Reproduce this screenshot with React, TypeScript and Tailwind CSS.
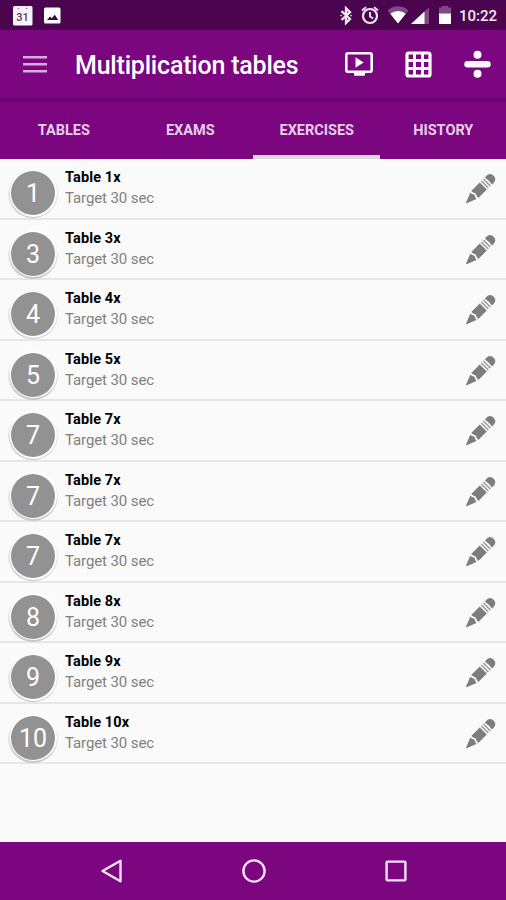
const TABS = ['TABLES', 'EXAMS', 'EXERCISES', 'HISTORY'];

const EXERCISES = [1, 3, 4, 5, 7, 7, 7, 8, 9, 10];

function StatusBar() {
  return (
    <div className="flex h-[30px] items-center bg-[#4b044e] pt-[2px]">
      <svg className="ml-3 h-5 w-[50px]" viewBox="0 0 50 20" fill="none">
        <rect x="1" y="0" width="19.5" height="19.5" rx="1.5" fill="#fbf3fb" />
        <circle cx="6.5" cy="2.5" r="1" fill="#a98bab" />
        <circle cx="14.5" cy="2.5" r="1" fill="#a98bab" />
        <text x="10.5" y="15.3" textAnchor="middle" fontSize="11" fontWeight="500" fontFamily="Roboto, sans-serif" fill="#5b3a5e">31</text>
        <rect x="32" y="1.5" width="16.5" height="16" rx="1.5" fill="#fff" />
        <path d="M35 14l3-3.400 1.800 1.600 3-3.400 3.400 5.200z" fill="#3a0a3d" />
      </svg>
      <div className="ml-auto flex items-center">
        <svg className="h-5 w-[116px]" viewBox="0 0 116 20" fill="none">
          <path d="M3.5 5.2l8.500 7.800-4 4V2.200l4 4L3.500 14" stroke="#f3e6f4" strokeWidth="2.300" />
          <path d="M3 9.600h.1M13 9.600h.1" stroke="#f3e6f4" strokeWidth="1.600" strokeLinecap="round" />
          <circle cx="32" cy="10" r="7" stroke="#f3e6f4" strokeWidth="2.200" />
          <path d="M32 6v4.500l3.200 2M24 4.500l4-3.400M40 4.500l-4-3.400" stroke="#f3e6f4" strokeWidth="1.900" />
          <path d="M49.500 4.500a15 15 0 0 1 21 0L60 17.500z" fill="#7f4a83" />
          <path d="M52.300 7.800a12 12 0 0 1 15.400 0L60 17.500z" fill="#fff" />
          <path d="M91 1.500v16.500H73z" fill="#7f4a83" />
          <path d="M86.500 5.500v12.500H73z" fill="#fff" />
          <path d="M101 1.500h3V0h6v1.500h3v7h-12z" fill="#7f4a83" />
          <path d="M101 7.500h12v10.500h-12z" fill="#fff" />
        </svg>
        <span className="mr-[9px] ml-[5px] w-[38px] text-[15px] leading-5 font-medium whitespace-nowrap text-[#f6ebf7]">10:22</span>
      </div>
    </div>
  );
}

function Toolbar() {
  return (
    <header className="flex h-[68px] items-center bg-[#7b0680] text-white">
      <svg className="ml-[23px] h-[18px] w-6" viewBox="0 0 24 18">
        <path d="M0 2.300h24M0 9.300h24M0 16.300h24" stroke="#d9aadc" strokeWidth="2.600" />
      </svg>
      <h1 className="ml-7 pt-[4px] text-[25px] leading-8 font-medium tracking-[-0.2px] whitespace-nowrap">Multiplication tables</h1>
      <svg className="mr-8 ml-auto h-6 w-7" viewBox="0 0 28 24" fill="none">
        <rect x="1.300" y="1.300" width="25.400" height="18.400" rx="1.800" stroke="#fff" strokeWidth="2.600" />
        <path d="M9 20h11v2.800q0 1-1 1h-9q-1 0-1-1zM10.500 5.300v10.400l8.200-5.200z" fill="#fff" />
      </svg>
      <svg className="mr-8 h-[27px] w-[27px]" viewBox="0 0 27 27" fill="none" stroke="#fff">
        <rect x="2" y="2" width="23" height="23" rx="1.800" strokeWidth="3.200" />
        <path d="M9.500 1v25M17.500 1v25M1 9.500h25M1 17.500h25" strokeWidth="2.800" />
      </svg>
      <svg className="mr-[15px] h-7 w-[27px]" viewBox="0 0 27 28" fill="#fff">
        <circle cx="13.500" cy="4.700" r="4" />
        <rect x="0.300" y="11" width="26.400" height="6.400" rx="3.200" />
        <circle cx="13.500" cy="23.700" r="4" />
      </svg>
    </header>
  );
}

function Pencil() {
  return (
    <svg className="h-[32px] w-[32px]" viewBox="0 0 32 32">
      <g transform="translate(1.300 30) rotate(-45)" fill="#7d7d7d">
        <path d="M0-.5L10-4.400Q10.200-2.200 11.600 0 10.200 2.200 10 4.400L0 .5z" />
        <path d="M12-5H24V5H12Q12 2.500 13.300 0 12-2.500 12-5z" />
        <path d="M25.400-5h1.500v10h-1.500zM28.300-5h1.500v10h-1.500z" fill="#9a9a9a" />
        <path d="M31.200-5h3.500q4 .9 4 5t-4 5h-3.500q1-5 0-10z" />
      </g>
    </svg>
  );
}

function ExerciseRow({ table }: { table: number }) {
  return (
    <li className="flex h-[60.5px] border-b-2 border-[#e6e6e6]">
      <div className="mt-[9px] ml-[8px] flex h-[50px] w-[50px] shrink-0 items-center justify-center rounded-full bg-linear-to-b from-[#fafafa] from-20% to-[#c6c6c6]">
        <div className="flex h-[47px] w-[47px] items-center justify-center rounded-full bg-white">
          <div className="flex h-11 w-11 items-center justify-center rounded-full bg-[#929292] pt-[2px] text-[25px] text-white">
            {table}
          </div>
        </div>
      </div>
      <div className="ml-[7px] pt-[9px] text-[15px] leading-5 whitespace-nowrap">
        <p className="text-[14.500px] font-bold tracking-[0.12px] text-black">Table {table}x</p>
        <p className="tracking-[-0.1px] text-[#808080]">Target 30 sec</p>
      </div>
      <div className="mt-[14px] mr-[9px] ml-auto">
        <Pencil />
      </div>
    </li>
  );
}

export default function App() {
  return (
    <main className="flex h-[900px] w-[506px] flex-col overflow-hidden bg-[#fafafa] font-[Roboto,sans-serif]">
      <StatusBar />
      <Toolbar />
      <div className="h-1 bg-linear-to-b from-[#680570] to-[#6b0570]" />
      <nav className="grid h-[57px] grid-cols-4 bg-[#7b0680]">
        {TABS.map((tab) => (
          <div
            key={tab}
            className={`flex items-center justify-center border-b-4 pt-[5px] pl-px text-[14.500px] font-bold text-[#e6cfe7] ${
              tab === 'EXERCISES' ? 'border-[#dcd8dc]' : 'border-transparent'
            }`}
          >
            {tab}
          </div>
        ))}
      </nav>
      <ul className="grow">
        {EXERCISES.map((table, i) => (
          <ExerciseRow key={i} table={table} />
        ))}
      </ul>
      <footer className="flex h-[58px] items-center bg-[#7b0680]">
        <svg className="ml-[101px] h-6 w-6" viewBox="0 0 24 24" fill="none" stroke="#f7e3f8" strokeWidth="2.400">
          <path d="M19.500 1.800v20.400L1.500 12z" strokeLinejoin="round" />
        </svg>
        <svg className="ml-[116px] h-[26px] w-[26px]" viewBox="0 0 26 26" fill="none" stroke="#f7e3f8" strokeWidth="2.400">
          <circle cx="13" cy="13" r="10.600" />
        </svg>
        <svg className="ml-[118px] h-[22px] w-[22px]" viewBox="0 0 22 22" fill="none" stroke="#f7e3f8" strokeWidth="2.400">
          <rect x="1.600" y="1.600" width="18.800" height="18.800" rx="0.800" />
        </svg>
      </footer>
    </main>
  );
}
